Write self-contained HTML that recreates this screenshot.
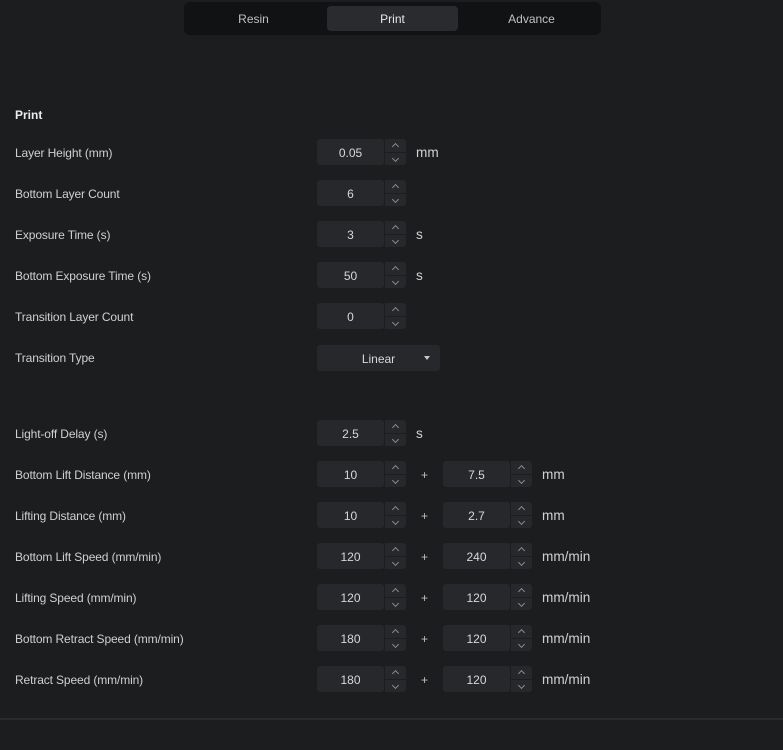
<!DOCTYPE html>
<html><head><meta charset="utf-8"><style>
*{margin:0;padding:0;box-sizing:border-box}
body{width:783px;height:750px;background:#1c1d1f;font-family:"Liberation Sans",sans-serif;position:relative;overflow:hidden;color:#d4d4d6}
.tabs{position:absolute;left:184px;top:2px;width:417px;height:33px;background:#111214;border-radius:6px}
.tab{position:absolute;top:4px;height:25px;line-height:27px;text-align:center;font-size:12px;color:#bfc0c2;width:131px;border-radius:4px}
.tab.a{background:#2a2b2e;color:#e8e8ea}
.h{position:absolute;left:15px;top:108px;font-size:12px;font-weight:bold;color:#ececee}
.l{position:absolute;left:15px;font-size:12px;color:#cfd0d2;line-height:16px;letter-spacing:-0.12px}
.b{position:absolute;height:26px;background:#27282b;border-radius:3px}
.v{position:absolute;width:67px;text-align:center;font-size:12px;line-height:28px;color:#d8d8da}
.sp{position:absolute;width:21px;height:26px}
.sp i{position:absolute;left:0;width:21px;height:12.5px;background:#27282b}
.sp i.u{top:0;border-radius:0 3px 0 0}.sp i.d{top:13.5px;border-radius:0 0 3px 0}
.sp i:after{content:"";position:absolute;left:8px;width:4px;height:4px;border-left:1px solid #8a8b8e;border-top:1px solid #8a8b8e}
.sp i.u:after{top:5px;transform:rotate(45deg)}
.sp i.d:after{top:3px;transform:rotate(-135deg)}
.un{position:absolute;font-size:13.6px;color:#d0d1d3;line-height:16px}
.pl{position:absolute;left:421px;font-size:12px;color:#c0c0c2;line-height:16px}
.line{position:absolute;left:0;top:718px;width:783px;height:2px;background:#2a2b2e}
</style></head><body>
<div class="tabs">
<div class="tab" style="left:4px">Resin</div>
<div class="tab a" style="left:143px">Print</div>
<div class="tab" style="left:282px">Advance</div>
</div>
<div class="h">Print</div>

<div class="l" style="top:145px">Layer Height (mm)</div>
<div class="b" style="left:317px;top:139px;width:67px"></div><div class="v" style="left:317px;top:139px">0.05</div><div class="sp" style="left:385px;top:139px"><i class="u"></i><i class="d"></i></div><div class="un" style="left:416px;top:145px">mm</div>

<div class="l" style="top:186px">Bottom Layer Count</div>
<div class="b" style="left:317px;top:180px;width:67px"></div><div class="v" style="left:317px;top:180px">6</div><div class="sp" style="left:385px;top:180px"><i class="u"></i><i class="d"></i></div>

<div class="l" style="top:227px">Exposure Time (s)</div>
<div class="b" style="left:317px;top:221px;width:67px"></div><div class="v" style="left:317px;top:221px">3</div><div class="sp" style="left:385px;top:221px"><i class="u"></i><i class="d"></i></div><div class="un" style="left:416px;top:227px">s</div>

<div class="l" style="top:268px">Bottom Exposure Time (s)</div>
<div class="b" style="left:317px;top:262px;width:67px"></div><div class="v" style="left:317px;top:262px">50</div><div class="sp" style="left:385px;top:262px"><i class="u"></i><i class="d"></i></div><div class="un" style="left:416px;top:268px">s</div>

<div class="l" style="top:309px">Transition Layer Count</div>
<div class="b" style="left:317px;top:303px;width:67px"></div><div class="v" style="left:317px;top:303px">0</div><div class="sp" style="left:385px;top:303px"><i class="u"></i><i class="d"></i></div>

<div class="l" style="top:350px">Transition Type</div>
<div class="b" style="left:317px;top:345px;width:123px"></div><div class="v" style="left:345px;top:345px">Linear</div>
<div style="position:absolute;left:424px;top:356px;width:0;height:0;border-left:3.5px solid transparent;border-right:3.5px solid transparent;border-top:4px solid #c8c8ca"></div>

<div class="l" style="top:426px">Light-off Delay (s)</div>
<div class="b" style="left:317px;top:420px;width:67px"></div><div class="v" style="left:317px;top:420px">2.5</div><div class="sp" style="left:385px;top:420px"><i class="u"></i><i class="d"></i></div><div class="un" style="left:416px;top:426px">s</div>

<div class="l" style="top:467px">Bottom Lift Distance (mm)</div>
<div class="b" style="left:317px;top:461px;width:67px"></div><div class="v" style="left:317px;top:461px">10</div><div class="sp" style="left:385px;top:461px"><i class="u"></i><i class="d"></i></div>
<div class="pl" style="top:467px">+</div>
<div class="b" style="left:443px;top:461px;width:67px"></div><div class="v" style="left:443px;top:461px">7.5</div><div class="sp" style="left:511px;top:461px"><i class="u"></i><i class="d"></i></div><div class="un" style="left:542px;top:467px">mm</div>

<div class="l" style="top:508px">Lifting Distance (mm)</div>
<div class="b" style="left:317px;top:502px;width:67px"></div><div class="v" style="left:317px;top:502px">10</div><div class="sp" style="left:385px;top:502px"><i class="u"></i><i class="d"></i></div>
<div class="pl" style="top:508px">+</div>
<div class="b" style="left:443px;top:502px;width:67px"></div><div class="v" style="left:443px;top:502px">2.7</div><div class="sp" style="left:511px;top:502px"><i class="u"></i><i class="d"></i></div><div class="un" style="left:542px;top:508px">mm</div>

<div class="l" style="top:549px">Bottom Lift Speed (mm/min)</div>
<div class="b" style="left:317px;top:543px;width:67px"></div><div class="v" style="left:317px;top:543px">120</div><div class="sp" style="left:385px;top:543px"><i class="u"></i><i class="d"></i></div>
<div class="pl" style="top:549px">+</div>
<div class="b" style="left:443px;top:543px;width:67px"></div><div class="v" style="left:443px;top:543px">240</div><div class="sp" style="left:511px;top:543px"><i class="u"></i><i class="d"></i></div><div class="un" style="left:542px;top:549px">mm/min</div>

<div class="l" style="top:590px">Lifting Speed (mm/min)</div>
<div class="b" style="left:317px;top:584px;width:67px"></div><div class="v" style="left:317px;top:584px">120</div><div class="sp" style="left:385px;top:584px"><i class="u"></i><i class="d"></i></div>
<div class="pl" style="top:590px">+</div>
<div class="b" style="left:443px;top:584px;width:67px"></div><div class="v" style="left:443px;top:584px">120</div><div class="sp" style="left:511px;top:584px"><i class="u"></i><i class="d"></i></div><div class="un" style="left:542px;top:590px">mm/min</div>

<div class="l" style="top:631px">Bottom Retract Speed (mm/min)</div>
<div class="b" style="left:317px;top:625px;width:67px"></div><div class="v" style="left:317px;top:625px">180</div><div class="sp" style="left:385px;top:625px"><i class="u"></i><i class="d"></i></div>
<div class="pl" style="top:631px">+</div>
<div class="b" style="left:443px;top:625px;width:67px"></div><div class="v" style="left:443px;top:625px">120</div><div class="sp" style="left:511px;top:625px"><i class="u"></i><i class="d"></i></div><div class="un" style="left:542px;top:631px">mm/min</div>

<div class="l" style="top:672px">Retract Speed (mm/min)</div>
<div class="b" style="left:317px;top:666px;width:67px"></div><div class="v" style="left:317px;top:666px">180</div><div class="sp" style="left:385px;top:666px"><i class="u"></i><i class="d"></i></div>
<div class="pl" style="top:672px">+</div>
<div class="b" style="left:443px;top:666px;width:67px"></div><div class="v" style="left:443px;top:666px">120</div><div class="sp" style="left:511px;top:666px"><i class="u"></i><i class="d"></i></div><div class="un" style="left:542px;top:672px">mm/min</div>

<div class="line"></div>
</body></html>
